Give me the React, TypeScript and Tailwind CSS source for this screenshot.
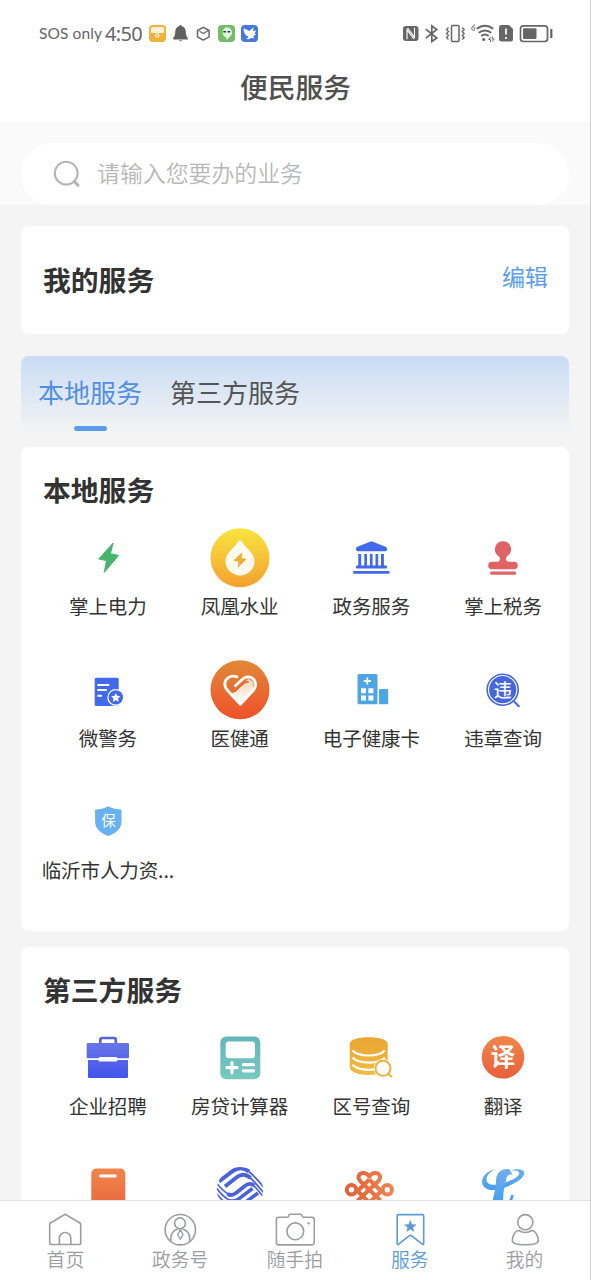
import React from 'react';

interface Service {
    id: string;
    label?: string;
    icon: React.ReactNode;
}

interface NavItem {
    label: string;
    icon: React.ReactNode;
    active?: boolean;
}

const Gradient = ({ id, from, to }: { id: string; from: string; to: string }) => (
    <linearGradient id={id} x1="0" y1="0" x2="0" y2="1">
        <stop offset="0" stopColor={from} />
        <stop offset="1" stopColor={to} />
    </linearGradient>
);

const localServices: Service[] = [
    {
        id: 'power',
        label: '掌上电力',
        icon: (
            <path d="M35.2 15 20.8 31l7.8 1.6-2.4 11.8 14.4-17-8.2-1.7z" fill="#43b56d" stroke="#43b56d" strokeLinejoin="round" />
        )
    },
    {
        id: 'water',
        label: '凤凰水业',
        icon: (
            <>
                <defs><Gradient id="water" from="#f9e43e" to="#f3a02f" /></defs>
                <circle cx="30" cy="29.8" r="29.5" fill="url(#water)" />
                <path d="M30 12.6c1 0 2 1.3 3.2 2.9 4 5.2 11.3 10.2 11.3 17.7a14.5 14.2 0 0 1-29 0c0-7.5 7.3-12.5 11.3-17.7 1.2-1.6 2.2-2.9 3.2-2.9z" fill="#fffaf0" />
                <path d="M32.4 24.2 23.4 32.5l5.1 1.2-.8 6 8.8-8.5-5-1.1z" fill="#f3aa35" />
            </>
        )
    },
    {
        id: 'government',
        label: '政务服务',
        icon: (
            <g fill="#4169ec">
                <path d="M30.4 13.2 44.6 18.8q1.4.6 1.4 2v.8q0 1.7-1.7 1.7H16.7q-1.7 0-1.7-1.7v-.8q0-1.400 1.400-2z" />
                <path d="M17.3 26h2.9v12h-2.9zM23.3 26h2.700v12h-2.700zM28.900 26h2.700v12h-2.700zM34.500 26h2.700v12h-2.700zM40 26h2.900v12H40z" />
                <rect x="15" y="37.5" width="31" height="2.9" rx="1" />
                <rect x="12" y="42.9" width="36.7" height="2.9" rx="1.2" />
            </g>
        )
    },
    {
        id: 'tax',
        label: '掌上税务',
        icon: (
            <g fill="#df6366">
                <path d="M30 13.2a8.1 8.1 0 0 1 4.5 14.8c-1.200 1-1.500 2-1.400 3.300.1 1.700 1 2.300 2.600 2.400H41a3.800 3.800 0 0 1 0 7.600H19a3.800 3.800 0 0 1 0-7.600h5.300c1.600-.1 2.500-.7 2.600-2.400.1-1.300-.2-2.300-1.400-3.300A8.100 8.100 0 0 1 30 13.200z" />
                <rect x="17.3" y="43.4" width="25.7" height="3.4" rx="1" />
            </g>
        )
    },
    {
        id: 'police',
        label: '微警务',
        icon: (
            <>
                <rect x="16.7" y="17.7" width="24" height="28.3" rx="1.5" fill="#4169ec" />
                <path d="M19.3 25h12M19.3 30h9.5M19.3 35.8h4.6" stroke="#fff" strokeWidth="1.9" />
                <circle cx="37.8" cy="37.4" r="8.5" fill="#fff" />
                <circle cx="37.8" cy="37.4" r="7.2" fill="#4169ec" />
                <path d="m37.8 32.9 1.4 2.9 3.2.4-2.300 2.300.6 3.200-2.900-1.500-2.900 1.500.6-3.200-2.300-2.300 3.200-.4z" fill="#fff" />
            </>
        )
    },
    {
        id: 'medical',
        label: '医健通',
        icon: (
            <>
                <defs>
                    <Gradient id="health" from="#e28838" to="#f0502a" />
                    <Gradient id="heart" from="#f9d3b6" to="#ffffff" />
                </defs>
                <circle cx="30" cy="29.8" r="29.5" fill="url(#health)" />
                <path d="M19 32 30.300 43.500 43.500 30V22l-5-3.500L26 31.500q-3.500 2.500-7 .5z" fill="url(#heart)" />
                <path d="M27 16.800C20 14.500 14.800 19 14.800 24.200c0 3 1.400 5 3.300 6.900L30.300 44.300 42.800 31c5.800-6.200 1.600-14.200-4.800-14.200-3.200 0-5 1.600-7 3.700l-5.600 5.300" fill="none" stroke="#fff" strokeWidth="2.8" strokeLinecap="round" strokeLinejoin="round" />
                <path d="M25.500 30.300 34 23q2-1.500 4-1" fill="none" stroke="#e66d32" strokeWidth="1.7" strokeLinecap="round" />
            </>
        )
    },
    {
        id: 'health-card',
        label: '电子健康卡',
        icon: (
            <>
                <rect x="16.5" y="14" width="20" height="30.3" rx="1.5" fill="#4fa5e4" />
                <rect x="38" y="29" width="9.2" height="15.3" rx="1.4" fill="#4fa5e4" />
                <path d="M26.3 17.4v7.2M22.700 21h7.200" stroke="#fff" strokeWidth="1.8" />
                <path d="M20 28.3h5v5h-5zM27.400 28.300h5v5h-5zM20 35.500h5v5h-5zM27.400 35.500h5v5h-5z" fill="#fff" />
            </>
        )
    },
    {
        id: 'violation',
        label: '违章查询',
        icon: (
            <>
                <circle cx="29.7" cy="29.7" r="15.5" fill="none" stroke="#4667dc" strokeWidth="1.6" />
                <circle cx="29.7" cy="29.7" r="13.6" fill="#4667dc" />
                <path d="m40.6 41 5.200 5.200" stroke="#4667dc" strokeWidth="2" strokeLinecap="round" />
                <text x="29.7" y="36.5" textAnchor="middle" fontSize="18" fontWeight="500" fill="#fff">违</text>
            </>
        )
    },
    {
        id: 'insurance',
        label: '临沂市人力资...',
        icon: (
            <>
                <path d="M30.3 14.3c4 2.5 8.300 3 13.200 3.500v11.700c0 7.700-6.200 12-13.200 14.600-7-2.600-13.200-6.900-13.200-14.600V17.800c4.900-.5 9.200-1 13.200-3.500z" fill="#67b1f2" />
                <text x="30.4" y="34.2" textAnchor="middle" fontSize="14.5" fill="#fff">保</text>
            </>
        )
    }
];

const thirdPartyServices: Service[] = [
    {
        id: 'job',
        label: '企业招聘',
        icon: (
            <>
                <defs><Gradient id="job" from="#6876e6" to="#4153ed" /></defs>
                <path d="M22.300 16v-4q0-2 2-2h11.500q2 0 2 2v4" fill="none" stroke="#5265dc" strokeWidth="2.6" />
                <path d="M10 15h39.700q1.300 0 1.300 1.300V29q0 1.300-1.300 1.300H10q-1.300 0-1.300-1.300V16.300Q8.700 15 10 15zM10 32h40v16.700q0 1.400-1.400 1.400H11.400q-1.400 0-1.400-1.400z" fill="url(#job)" />
                <rect x="20.6" y="29" width="18.7" height="4.4" rx="1.2" fill="#fff" />
            </>
        )
    },
    {
        id: 'calculator',
        label: '房贷计算器',
        icon: (
            <>
                <defs><Gradient id="calc" from="#62b7ba" to="#78c9bd" /></defs>
                <rect x="10.3" y="8.4" width="40" height="42.8" rx="6" fill="url(#calc)" />
                <rect x="15.7" y="13.6" width="29.3" height="16.7" rx="3" fill="#fff" />
                <path d="M22 34.7v10M17 39.700h10M33.300 36.700h10.200M33.300 42.800h10.200" stroke="#fff" strokeWidth="3.2" strokeLinecap="round" />
            </>
        )
    },
    {
        id: 'area-code',
        label: '区号查询',
        icon: (
            <>
                <defs><Gradient id="area" from="#eaa532" to="#eebd43" /></defs>
                <path d="M8.700 16C8.700 12 17 9.300 27.700 9.300S46.700 12 46.700 16v23c0 4.500-8.300 8-19 8s-19-3.500-19-8z" fill="url(#area)" />
                <path d="M11.500 22.500c3 3.200 9 5 16.200 5S41 25.700 43.800 22.500M11.500 29.600c3 3.200 9 5 16.200 5s13.300-1.700 16.100-5M11.500 36.800c3 3.200 9 5 16.200 5 4 0 7-.4 10-1.300" fill="none" stroke="#fff" strokeWidth="2.2" />
                <circle cx="42" cy="40.3" r="9.2" fill="#fff" />
                <circle cx="42" cy="40.3" r="7.5" fill="#fff" stroke="#eab13b" strokeWidth="2" />
                <path d="m47.300 46 3 2.500" stroke="#eab13b" strokeWidth="2" strokeLinecap="round" />
            </>
        )
    },
    {
        id: 'translate',
        label: '翻译',
        icon: (
            <>
                <defs><Gradient id="translate" from="#f0874c" to="#e85f39" /></defs>
                <circle cx="30" cy="29.3" r="21.3" fill="url(#translate)" />
                <text x="30" y="38.3" textAnchor="middle" fontSize="24.5" fontWeight="700" fill="#fff">译</text>
            </>
        )
    },
    {
        id: 'phone',
        icon: (
            <>
                <defs><Gradient id="phone" from="#f0864b" to="#e8623c" /></defs>
                <rect x="13.3" y="8.6" width="34" height="46" rx="5" fill="url(#phone)" />
                <path d="M22.500 16h14.800" stroke="#fff" strokeWidth="2.8" strokeLinecap="round" />
            </>
        )
    },
    {
        id: 'mobile',
        icon: (
            <>
                <defs>
                    <clipPath id="mobile"><ellipse cx="30" cy="30" rx="23.2" ry="23" /></clipPath>
                </defs>
                <g clipPath="url(#mobile)" fill="none" stroke="#4a63dc" strokeLinecap="butt">
                    <path d="M9 21.500 22.500 11.200C29 6.500 34 7.500 39 11.500" strokeWidth="4" />
                    <path d="M37.500 10.500C43 14.500 48 20 54 27.500" strokeWidth="1.8" />
                    <path d="M15 26.500 27 17C32 13.500 36 14 40.500 18" strokeWidth="3.800" />
                    <path d="M39 16.800C44 21 48 26 54 33" strokeWidth="1.800" />
                    <path d="M6 22.500C11 28.500 15 32.500 19 34.500" strokeWidth="1.700" />
                    <path d="M17.500 34c3 1.700 5.500 1.300 8.500-1L32 28.300l3.500-2.800c3.500-2.500 6-2 8.500 0" strokeWidth="3.800" />
                    <path d="M42.500 24.500C46 27.500 49 31.500 54 37.500" strokeWidth="1.700" />
                    <path d="M6 27.500C11 34 15.500 38.500 20.500 40.800" strokeWidth="1.700" />
                    <path d="M19 40.300c4 1.700 7 .8 10.500-2L42.500 28.500" strokeWidth="3.600" />
                    <path d="M6 33C12 40.500 17 45 22 47" strokeWidth="1.700" />
                    <path d="M20 46.500c5 2 9 1 13-2.500L48 33" strokeWidth="3.600" />
                </g>
            </>
        )
    },
    {
        id: 'unicom',
        icon: (
            <>
                <defs>
                    <linearGradient id="unicom" gradientUnits="userSpaceOnUse" x1="8" y1="30" x2="52" y2="30">
                        <stop offset="0" stopColor="#e66039" />
                        <stop offset="1" stopColor="#ef854c" />
                    </linearGradient>
                </defs>
                <g fill="none" stroke="url(#unicom)" strokeWidth="4" strokeLinejoin="round">
                    <path d="M28.300 29.500 36.500 22c5.500-5.500 1-9.500-3-9-2.300.3-4 1.500-5.200 3.500-1.200-2-2.900-3.200-5.200-3.500-4-.5-8.500 3.500-3 9l19.500 18.500" />
                    <path d="M28.300 29.500 16.500 41M28.300 19.500 39 30M28.300 19.500 17.600 30" />
                    <circle cx="10.500" cy="29.8" r="4.7" />
                    <circle cx="46.300" cy="29.8" r="4.7" />
                    <path d="M15.500 30 28.300 42.500 41.500 30" />
                </g>
            </>
        )
    },
    {
        id: 'telecom',
        icon: (
            <>
                <defs><Gradient id="telecom" from="#72aeed" to="#429eef" /></defs>
                <path d="M22.300 9C13 11 9 17 9 22c.5 6 7 9.500 15 7.500 12-2.500 27.500-9.500 27.300-16.800C51 9 44 8 36.500 10.800c4.500-.8 9.500-.3 9.800 2.200.2 5-13.300 10-21.800 11.500-7.500 1-11-1-11-5 0-4 4-8 8.800-10.500z" fill="url(#telecom)" />
                <path d="M23 21c0-8 5-12 11-12 3 0 4.500 3 5.300 6-3.300-1.500-5.300.5-6.100 4-2.200 10-4.200 18-2.200 26H19c1-9 4-15 4-24z" fill="url(#telecom)" />
                <path d="M39.300 35c-.3 4-3 8-8 10" fill="none" stroke="#429eef" strokeWidth="2.5" />
            </>
        )
    }
];

const navItems: NavItem[] = [
    {
        label: '首页',
        icon: (
            <>
                <path d="M20.200 2.300 35 11c.5.300.7.600.7 1.200v18.500q0 1.800-1.800 1.800H6.500q-1.800 0-1.800-1.800V12.200c0-.6.200-.9.700-1.200z" />
                <path d="M14.400 32.500v-6.300a5.700 5.700 0 0 1 11.400 0v6.300" />
            </>
        )
    },
    {
        label: '政务号',
        icon: (
            <>
                <circle cx="20.3" cy="17.7" r="15.2" />
                <circle cx="20" cy="11.3" r="5.4" />
                <path d="M10.900 29.500v-3.300c0-5 3.300-8.700 7.200-8.900M29.700 29.500v-3.300c0-5-3.300-8.700-7.200-8.900" />
                <path d="m20.300 18.200 2.700 4.200-2.700 4.800-2.700-4.800zM19 18h2.600" strokeWidth="1.3" />
            </>
        )
    },
    {
        label: '随手拍',
        icon: (
            <>
                <path d="M12.300 5.300q1.300-.3 1.500-1.800.2-1.300 1.500-1.300h10.200q1.300 0 1.500 1.300.2 1.500 1.500 1.800h8.500q2.300 0 2.300 2.300v23q0 2.300-2.300 2.300H3.700q-2.300 0-2.300-2.300v-23q0-2.300 2.300-2.300z" />
                <circle cx="20.3" cy="19.3" r="8.4" />
                <circle cx="33.7" cy="11.3" r=".5" />
            </>
        )
    },
    {
        label: '服务',
        active: true,
        icon: (
            <>
                <path d="M8.300 2.600h24.300q1.100 0 1.100 1.100v27.700q0 1.700-1.400.7l-11.300-8.700q-.6-.4-1.200 0L8.600 32.100q-1.400 1-1.400-.7V3.700q0-1.100 1.100-1.100z" />
                <path d="m20.300 8.500 1.600 3.900 4.200.3-3.200 2.700 1 4.100-3.600-2.200-3.600 2.200 1-4.100-3.200-2.700 4.200-.3z" fill="currentColor" strokeWidth=".4" />
            </>
        )
    },
    {
        label: '我的',
        icon: (
            <>
                <circle cx="20.3" cy="10.2" r="7.6" />
                <path d="M14 18.500c-1.800 0-3.200.5-4.200 2.300C8.300 23.300 7.300 26 7.300 28.500c0 3.300 5.500 4.300 13 4.300s13-1 13-4.300c0-2.500-1-5.200-2.500-7.700-1-1.800-2.400-2.300-4.200-2.300-1.800 1.300-3.800 2-6.300 2s-4.500-.7-6.300-2z" />
            </>
        )
    }
];

const StatusBar = () => (
    <div className="h-[54px] pt-[13px] pl-[39px] pr-[37px] flex items-center justify-between text-[#666]">
        <div className="flex items-center">
            <span className="w-[66px] text-[15.5px] whitespace-nowrap font-['Lato'] tracking-[0.1px]">SOS only</span>
            <span className="w-[43px] text-[20px] leading-5 font-['Noto_Sans'] tracking-[-0.7px]">4:50</span>
            <svg width="110" height="20" viewBox="148 24 110 20">
                <rect x="149" y="25" width="17" height="17" rx="4" fill="#f1b13c" />
                <path d="M152.500 27h10q1.500 0 1.500 1.500v3.500q0 1-1 1h-11q-1 0-1-1v-3.500q0-1.500 1.500-1.500z" fill="#fff2d8" />
                <circle cx="157.3" cy="35.5" r="1.7" fill="none" stroke="#fff3d8" strokeWidth="1.3" />
                <path d="M180.500 25q1.200 0 1.300 1.300c3 .8 4 3 4 6 0 3.200 1 4.200 2 5.700v1.500h-14.600V38c1-1.500 2-2.500 2-5.700 0-3 1-5.200 4-6q.1-1.300 1.300-1.300zM178.800 40.300h3.400q-1.700 2-3.400 0z" fill="#606060" />
                <path d="m203.300 27.300 5.800 3.200v6.400l-5.800 3.200-5.800-3.200v-6.400z" fill="none" stroke="#666" strokeWidth="1.5" strokeLinejoin="round" />
                <path d="m199.500 31.300 3.800 2.200 5.200-3" fill="none" stroke="#666" strokeWidth="1.3" />
                <rect x="218" y="25" width="17" height="17" rx="4" fill="#77b968" />
                <path d="M226.600 27.200a5.300 5.300 0 0 1 3.200 9.600c-1 1-1.500 2.200-3.500 3.200v-2.600a5.300 5.300 0 0 1 .3-10.200z" fill="#d9f6de" />
                <path d="M223.300 31.800h2.700M227.500 31.800h2.700" stroke="#333b3a" strokeWidth="1.5" />
                <rect x="241" y="25" width="17" height="17" rx="4" fill="#4777df" />
                <path d="m243.500 28.300 6 2.700 4-3.800-.5 3.800 3-.5-1.500 3.500 1.500.5-2.800 1.700 1 2-3.500-.3c-1.500 1.700-3.500 1.500-4.500.6 1.200-.2 2-.8 2.200-1.800-3.200-1-4.800-3.800-4.900-8.400z" fill="#fff" />
            </svg>
        </div>
        <svg width="152" height="20" viewBox="401 24 152 20" fill="none" stroke="#666" strokeWidth="1.5">
            <rect x="403" y="26" width="15.5" height="15" rx="3" fill="#666" stroke="none" />
            <path d="M407 39.300v-9.500l7 9M414.500 27.700v9.500l-7-9" stroke="#fff" strokeWidth="1.1" />
            <path d="m425.800 29.200 11 8.800-5 3.500V26l5 3.500-11 8.700" strokeWidth="1.7" />
            <rect x="451.500" y="25.5" width="7.5" height="16" rx="1" />
            <path d="m448.500 27.500-2 2 2 2-2 2 2 2-2 2 2 2M462.200 27.500l2 2-2 2 2 2-2 2 2 2-2 2" strokeWidth="1.3" />
            <path d="M475 24.700q-3.300 1.300-3.300 3.800 0 1.800 1.600 1.800 1.500 0 1.500-1.600 0-1.500-1.500-1.500" strokeWidth="1" />
            <path d="M476.700 28.800c5-4 11.500-4 16.500 0M478.700 32.800c4-3 8.500-3 12.500 0M481.200 36c2.500-2 5-2 7.500 0" strokeWidth="2" />
            <circle cx="483.7" cy="39.5" r="1.6" fill="#666" stroke="none" />
            <path d="m490.500 37-1.800 2.500h1.800V42M492.300 41.500l1.800-2.500h-1.800v-2.500" strokeWidth="1" />
            <path d="M501.500 25h7.500l4 4v10q0 2.500-2.500 2.500h-9q-2.500 0-2.500-2.500V27.500q0-2.500 2.500-2.500z" fill="#666" stroke="none" />
            <path d="M506 28.500v6M506 37v2" stroke="#fff" strokeWidth="1.7" />
            <rect x="520.5" y="25.8" width="27" height="15.7" rx="3" strokeWidth="1.7" />
            <rect x="523" y="28.3" width="13.5" height="10.7" rx="1" fill="#666" stroke="none" />
            <path d="M551.300 29v9" strokeWidth="2.2" />
        </svg>
    </div>
);

const ServiceCard = ({ title, services }: { title: string; services: Service[] }) => (
    <section className="bg-white rounded-lg pl-[21px] pt-[22px] h-[484px] shrink-0">
        <h2 className="pl-px text-[27.8px] leading-10 font-bold text-[#333]">{title}</h2>
        <div className="grid grid-cols-4 mt-[19px]">
            {services.map((service) => (
                <div key={service.id} className="h-[131.8px] flex flex-col items-center">
                    <svg width="60" height="60" viewBox="0 0 60 60" className="shrink-0">{service.icon}</svg>
                    {service.label && (
                        <span className="mt-[3px] text-[19.5px] leading-[30px] whitespace-nowrap tracking-[-0.1px] text-[#333]">{service.label}</span>
                    )}
                </div>
            ))}
        </div>
    </section>
);

const App: React.FC = () => {
    return (
        <div className="w-full h-[1280px] overflow-hidden flex flex-col bg-[#f4f4f4] border-r border-[#cfcfcf] font-['Noto_Sans_CJK_SC',sans-serif]">
            <header className="bg-white h-[122px] shrink-0">
                <StatusBar />
                <h1 className="mt-[12px] pl-px text-center text-[27.8px] leading-10 font-medium text-[#505050]">便民服务</h1>
            </header>

            <div className="bg-[#fafafa] h-[83px] shrink-0 px-[21px] pt-[20.5px]">
                <div className="bg-white rounded-full h-[62px] flex items-center pl-8">
                    <svg width="27" height="27" viewBox="0 0 27 27" fill="none" stroke="#b4b4b4" strokeWidth="2">
                        <circle cx="13.2" cy="13.2" r="11.4" />
                        <path d="m21.500 21.800 3.500 3.500" strokeWidth="3" strokeLinecap="round" />
                    </svg>
                    <span className="ml-[17px] mb-[4px] text-[22.9px] leading-8 font-[350] text-[#b8b8b8]">请输入您要办的业务</span>
                </div>
            </div>

            <main className="flex-1 min-h-0 overflow-hidden px-[21px] pt-[21px] flex flex-col">
                <section className="bg-white rounded-lg h-[108px] shrink-0 pl-[22px] pr-[21px] flex items-center justify-between">
                    <h2 className="mb-[3px] text-[27.8px] leading-10 font-bold text-[#333]">我的服务</h2>
                    <button className="text-[23px] leading-8 mb-[8px] text-[#5a9ee8]">编辑</button>
                </section>

                <div className="mt-[22px] h-[77px] shrink-0 rounded-t-lg bg-linear-to-b from-[#c9dcf4] to-[#f4f4f4] pl-[17px] pt-[16px] flex gap-[28px] text-[26px] leading-10">
                    <div className="text-[#518fe3]">
                        本地服务
                        <div className="w-[33px] h-[5px] mt-[14px] ml-[36px] rounded-full bg-[#5a9cea]" />
                    </div>
                    <div className="text-[#555]">第三方服务</div>
                </div>

                <div className="mt-[14px] flex flex-col gap-4">
                    <ServiceCard title="本地服务" services={localServices} />
                    <ServiceCard title="第三方服务" services={thirdPartyServices} />
                </div>
            </main>

            <nav className="h-20 shrink-0 bg-white border-t border-[#e1e1e1] px-[8px] pt-[11px] grid grid-cols-5">
                {navItems.map((item) => (
                    <div key={item.label} className={item.active ? 'flex flex-col items-center text-[#5a9bd8]' : 'flex flex-col items-center text-[#9b9da3]'}>
                        <svg width="40" height="35" viewBox="0 0 40 35" fill="none" stroke="currentColor" strokeWidth="1.6" strokeLinejoin="round">{item.icon}</svg>
                        <span className="text-[18.8px] leading-6 font-[350]">{item.label}</span>
                    </div>
                ))}
            </nav>
        </div>
    );
};

export default App;
